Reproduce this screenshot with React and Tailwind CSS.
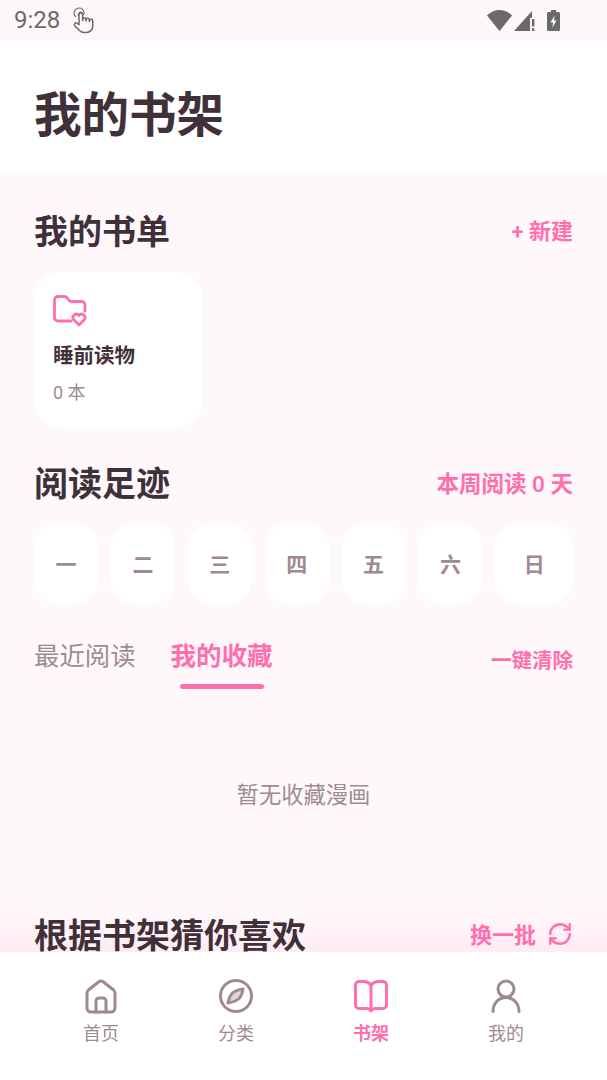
import React from 'react';

const pink = 'text-[#ff6fae]';
const muted = 'text-[#a08a92]';
const days = ['一', '二', '三', '四', '五', '六'];

const TouchIcon = () => (
  <svg width="24" height="27" viewBox="0 0 24 27" fill="none" stroke="currentColor" strokeWidth="1.5" strokeLinecap="round" strokeLinejoin="round">
    <path d="M3.500 9.500a5 5 0 1 1 8.500-2.500" strokeWidth="1.1" />
    <path d="M6 8.500a3 3 0 0 1 5.500-1" strokeWidth="1.1" />
    <path d="M7 17.500V7a1.800 1.800 0 0 1 3.600 0v6.500" />
    <path d="M10.600 12.500a1.700 1.700 0 0 1 3.400 0v1.500" />
    <path d="M14 13a1.700 1.700 0 0 1 3.400 0v1.500" />
    <path d="M17.400 14a1.700 1.700 0 0 1 3.400 0v5a6.500 6.500 0 0 1-6.500 6.500h-2c-2.300 0-3.600-.8-4.800-2l-4.700-4.800a1.700 1.700 0 0 1 2.400-2.400L7 17.500" />
  </svg>
);

const StatusIcons = () => (
  <div className="flex items-center text-[#6a6a6a]">
    <svg width="25" height="21" viewBox="0 0 25 21" fill="currentColor">
      <path d="M0 5.500C3.300 2 7.700 0 12.500 0S21.700 2 25 5.500L12.500 21z" />
    </svg>
    <svg className="ml-[2px]" width="22" height="21" viewBox="0 0 22 21" fill="currentColor">
      <path d="M0 21L18 1v7h-2v13z" />
      <rect x="18" y="9" width="2.400" height="7.500" />
      <rect x="18" y="18.200" width="2.400" height="2.800" />
    </svg>
    <svg className="ml-[11px]" width="13" height="21" viewBox="0 0 13 21">
      <path fill="currentColor" d="M4 0h5v2h2.500A1.500 1.500 0 0 1 13 3.500v16a1.500 1.500 0 0 1-1.500 1.500h-10A1.500 1.500 0 0 1 0 19.500v-16A1.500 1.500 0 0 1 1.500 2H4z" />
      <path fill="#fff8fb" d="M7.500 5.500L3.500 12.500h2.500L5.500 17.500l4-7H7z" />
    </svg>
  </div>
);

const FolderHeart = () => (
  <svg width="35" height="32" viewBox="0 0 35 32" fill="none" stroke="#ff6fae" strokeWidth="2.800" strokeLinecap="round" strokeLinejoin="round">
    <path d="M18 26H5a3.500 3.500 0 0 1-3.500-3.500V5A3.500 3.500 0 0 1 5 1.500h6.500c1 0 1.800.4 2.400 1.200l2.200 2.600c.6.800 1.400 1.200 2.400 1.200H28.500A3.500 3.500 0 0 1 32 10v6" />
    <path d="M26 30l-5.200-5.200a3.400 3.400 0 0 1 4.800-4.800l.4.400.4-.4a3.400 3.400 0 0 1 4.800 4.800z" />
  </svg>
);

const RefreshIcon = () => (
  <svg width="26" height="26" viewBox="0 0 24 24" fill="none" stroke="#ff6fae" strokeWidth="2.200" strokeLinecap="round" strokeLinejoin="round">
    <path d="M3 12a9 9 0 0 1 9-9 9.750 9.750 0 0 1 6.740 2.740L21 8" />
    <path d="M21 3v5h-5" />
    <path d="M21 12a9 9 0 0 1-9 9 9.750 9.750 0 0 1-6.740-2.740L3 16" />
    <path d="M8 16H3v5" />
  </svg>
);

const HomeIcon = () => (
  <svg width="32" height="35" viewBox="0 0 32 35" fill="none" stroke="currentColor" strokeWidth="3" strokeLinecap="round" strokeLinejoin="round">
    <path d="M2 14c0-1.200.5-2.200 1.400-3L13.500 3a4 4 0 0 1 5 0l10.100 8c.9.800 1.400 1.800 1.400 3v15a4 4 0 0 1-4 4H6a4 4 0 0 1-4-4z" />
    <path d="M11 33V22a3 3 0 0 1 3-3h4a3 3 0 0 1 3 3v11" />
  </svg>
);

const CompassIcon = () => (
  <svg width="36" height="36" viewBox="0 0 36 36" fill="none" stroke="currentColor" strokeWidth="3" strokeLinecap="round" strokeLinejoin="round">
    <circle cx="18" cy="18" r="15.500" />
    <path d="M25 11c-.6 4.500-2 7.500-4 9.500-2 1.800-6 3.700-11 4.500.8-4.500 2.300-7.800 4.300-9.800 2.200-2 6-3.600 10.700-4.200z" fill="currentColor" fillOpacity="0.35" />
  </svg>
);

const BookIcon = () => (
  <svg width="36" height="36" viewBox="0 0 36 36" fill="none" stroke="currentColor" strokeWidth="3" strokeLinecap="round" strokeLinejoin="round">
    <path d="M18 7c-2-2.300-4.500-3.500-7-3.500H6A3.500 3.500 0 0 0 2.500 7v20A3.500 3.500 0 0 0 6 30.500h8c1.500 0 2.800.8 4 2.500 1.200-1.700 2.500-2.500 4-2.500h8a3.500 3.500 0 0 0 3.500-3.500V7A3.500 3.500 0 0 0 30 3.500h-5c-2.500 0-5 1.200-7 3.500z" />
    <path d="M18 7v25" />
  </svg>
);

const UserIcon = () => (
  <svg width="30" height="34" viewBox="0 0 30 34" fill="none" stroke="currentColor" strokeWidth="3" strokeLinecap="round">
    <circle cx="15" cy="10" r="8" />
    <path d="M2 32.500c0-8 5.500-14 13-14s13 6 13 14" />
  </svg>
);

const tabs = [
  { label: '首页', icon: <HomeIcon /> },
  { label: '分类', icon: <CompassIcon /> },
  { label: '书架', icon: <BookIcon />, active: true },
  { label: '我的', icon: <UserIcon /> },
];

const SectionHead = ({ title, children, className = '' }) => (
  <div className={`flex items-center justify-between ${className}`}>
    <h2 className="text-[34px] leading-[40px] font-bold text-[#40303a]">{title}</h2>
    {children}
  </div>
);

export default function App() {
  return (
    <div className="h-[1080px] w-[607px] flex flex-col overflow-hidden bg-[#fff8fb] font-['Roboto','Noto_Sans_CJK_SC',sans-serif]">
      <div className="h-10 shrink-0 flex items-center justify-between pl-[14px] pr-[47px] bg-[#fff8fb]">
        <div className="flex items-center gap-[12px] text-[#6a6a6a]">
          <span className="text-[24px] leading-none">9:28</span>
          <TouchIcon />
        </div>
        <StatusIcons />
      </div>

      <header className="h-[132px] shrink-0 flex items-center bg-white px-[34px] pt-5">
        <h1 className="text-[47.500px] leading-[56px] font-bold text-[#40303a]">我的书架</h1>
      </header>

      <main className="relative flex-1 min-h-0 overflow-hidden px-[34px] pt-10">
        <div className="absolute inset-x-0 bottom-0 h-10 bg-gradient-to-b from-[#fff8fb] to-[#ffebf3]" />

        <SectionHead title="我的书单">
          <span className={`text-[22px] leading-[28px] font-semibold ${pink}`}>+ 新建</span>
        </SectionHead>

        <div className="mt-5 w-[169px] h-[156px] rounded-[28px] bg-white pl-[19px] pt-[23px]">
          <FolderHeart />
          <p className="mt-[15px] text-[20.500px] leading-[28px] font-semibold text-[#40303a]">睡前读物</p>
          <p className={`mt-[11px] text-[18px] leading-[24px] ${muted}`}>0 本</p>
        </div>

        <SectionHead title="阅读足迹" className="mt-9">
          <span className={`text-[22.500px] leading-[28px] font-semibold ${pink}`}>本周阅读 0 天</span>
        </SectionHead>

        <div className="mt-[19px] flex gap-[12.900px]">
          {days.map((day) => (
            <div key={day} className={`w-16 h-[81px] pt-1 rounded-[24px] bg-white flex items-center justify-center text-[21px] font-semibold ${muted}`}>
              {day}
            </div>
          ))}
          <div className={`flex-1 h-[81px] pt-1 rounded-[24px] bg-white flex items-center justify-center text-[21px] font-semibold ${muted}`}>
            日
          </div>
        </div>

        <div className="mt-[34px] flex items-start">
          <span className={`text-[25.400px] leading-[36px] ${muted}`}>最近阅读</span>
          <div className="ml-[35px] flex flex-col items-center">
            <span className={`text-[25.500px] leading-[36px] font-bold ${pink}`}>我的收藏</span>
            <span className="mt-[10px] w-[84px] h-[5px] rounded-full bg-[#ff6fae]" />
          </div>
          <span className={`ml-auto mt-[7px] text-[20.500px] leading-[32px] font-semibold ${pink}`}>一键清除</span>
        </div>

        <p className={`mt-[90px] text-center text-[22.300px] leading-[32px] ${muted}`}>暂无收藏漫画</p>

        <SectionHead title="根据书架猜你喜欢" className="relative mt-[105px]">
          <div className="flex items-center gap-[11px]">
            <span className={`text-[22px] leading-[28px] font-semibold ${pink}`}>换一批</span>
            <div className="-mt-1"><RefreshIcon /></div>
          </div>
        </SectionHead>
      </main>

      <nav className="h-[128px] shrink-0 grid grid-cols-4 bg-white px-[33.500px] pt-[26px]">
        {tabs.map((tab) => (
          <div key={tab.label} className={`flex flex-col items-center ${tab.active ? pink : muted}`}>
            <div className="h-9 flex items-center justify-center">{tab.icon}</div>
            <span className={`mt-2 text-[18px] leading-[24px] ${tab.active ? 'font-bold' : ''}`}>{tab.label}</span>
          </div>
        ))}
      </nav>
    </div>
  );
}
